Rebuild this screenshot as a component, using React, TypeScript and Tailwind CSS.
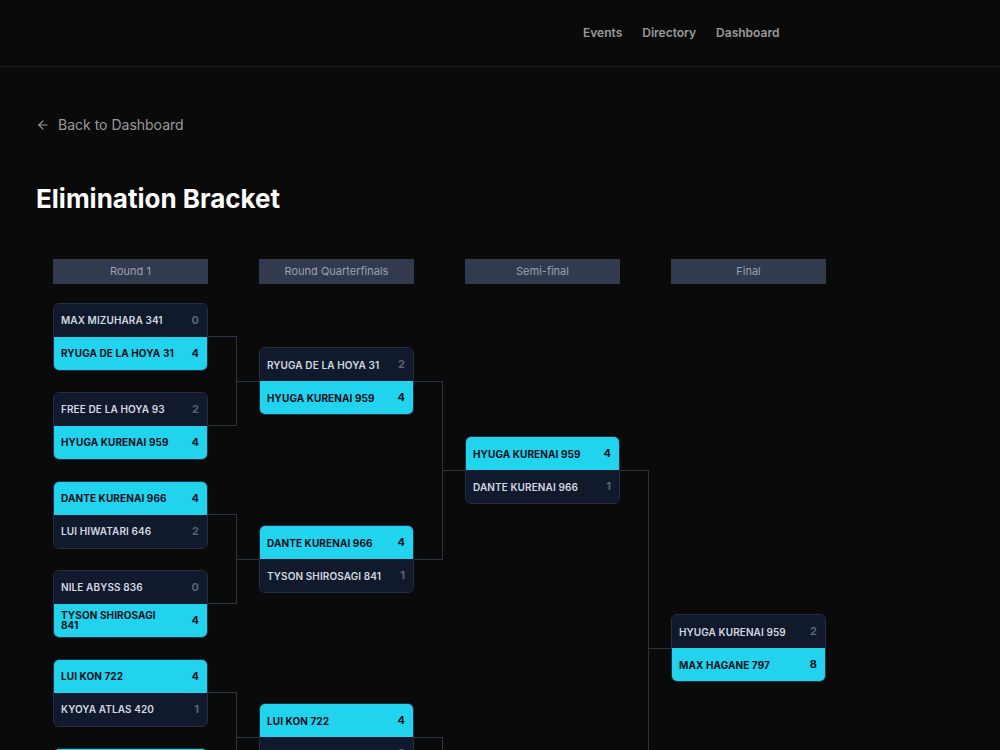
import { ArrowLeft } from "lucide-react";

type Player = { name: string; score: number };
type Match = { a: Player; b: Player };

const ROUNDS: { title: string; matches: Match[] }[] = [
  {
    title: "Round 1",
    matches: [
      { a: { name: "MAX MIZUHARA 341", score: 0 }, b: { name: "RYUGA DE LA HOYA 31", score: 4 } },
      { a: { name: "FREE DE LA HOYA 93", score: 2 }, b: { name: "HYUGA KURENAI 959", score: 4 } },
      { a: { name: "DANTE KURENAI 966", score: 4 }, b: { name: "LUI HIWATARI 646", score: 2 } },
      { a: { name: "NILE ABYSS 836", score: 0 }, b: { name: "TYSON SHIROSAGI 841", score: 4 } },
      { a: { name: "LUI KON 722", score: 4 }, b: { name: "KYOYA ATLAS 420", score: 1 } },
      { a: { name: "KAI HIWATARI 208", score: 4 }, b: { name: "ZEO ABYSS 615", score: 3 } },
      { a: { name: "MAX HAGANE 797", score: 4 }, b: { name: "KENTA TATEGAMI 118", score: 1 } },
      { a: { name: "DAIGO KUROSU 377", score: 2 }, b: { name: "SHU ABYSS 504", score: 4 } },
    ],
  },
  {
    title: "Round Quarterfinals",
    matches: [
      { a: { name: "RYUGA DE LA HOYA 31", score: 2 }, b: { name: "HYUGA KURENAI 959", score: 4 } },
      { a: { name: "DANTE KURENAI 966", score: 4 }, b: { name: "TYSON SHIROSAGI 841", score: 1 } },
      { a: { name: "LUI KON 722", score: 4 }, b: { name: "KAI HIWATARI 208", score: 2 } },
      { a: { name: "MAX HAGANE 797", score: 4 }, b: { name: "SHU ABYSS 504", score: 2 } },
    ],
  },
  {
    title: "Semi-final",
    matches: [
      { a: { name: "HYUGA KURENAI 959", score: 4 }, b: { name: "DANTE KURENAI 966", score: 1 } },
      { a: { name: "LUI KON 722", score: 1 }, b: { name: "MAX HAGANE 797", score: 4 } },
    ],
  },
  {
    title: "Final",
    matches: [{ a: { name: "HYUGA KURENAI 959", score: 2 }, b: { name: "MAX HAGANE 797", score: 8 } }],
  },
];

function Row({ p, win }: { p: Player; win: boolean }) {
  return (
    <div
      className={`flex h-[33px] items-center justify-between gap-2 pl-[7px] pr-2 ${
        win ? "bg-[#22d3ee] text-[#0b1120]" : "bg-[#111a2d] text-[#d4d8e0]"
      }`}
    >
      <span
        className={`text-[10px] uppercase leading-none tracking-[0.01em] ${
          win ? "max-w-[114px] font-bold" : "max-w-[120px] font-semibold"
        }`}
      >
        {p.name}
      </span>
      <span className={`min-w-[12px] text-right text-[11px] font-bold ${win ? "text-[#0b1120]" : "text-[#5b6478]"}`}>
        {p.score}
      </span>
    </div>
  );
}

function MatchCard({ m }: { m: Match }) {
  const aWin = m.a.score > m.b.score;
  return (
    <div className="w-[155px] overflow-hidden rounded-md border border-[#263044]">
      <Row p={m.a} win={aWin} />
      <Row p={m.b} win={!aWin} />
    </div>
  );
}

function Connector({ pairs }: { pairs: number }) {
  return (
    <div className="w-[51px] shrink-0 pt-[33px]">
      <div className="flex h-[712px] flex-col">
        {Array.from({ length: pairs }).map((_, i) => (
          <div key={i} className="flex flex-1">
            <div className="flex w-[29px] flex-col">
              <div className="flex-1" />
              <div className="flex-[2] border-y border-r border-[#2b3445]" />
              <div className="flex-1" />
            </div>
            <div className="flex flex-1 items-center">
              <div className="h-px w-full bg-[#2b3445]" />
            </div>
          </div>
        ))}
      </div>
    </div>
  );
}

export default function App() {
  return (
    <div className="min-h-screen bg-[#0a0a0a] font-['Inter',sans-serif] text-white">
      <header className="flex h-[67px] items-center border-b border-[#1f1f1f]">
        <nav className="ml-[583px] flex gap-5 text-[12px] font-semibold text-[#9a9a9a]">
          <span>Events</span>
          <span>Directory</span>
          <span>Dashboard</span>
        </nav>
      </header>

      <main className="px-9 pt-[48px]">
        <a className="flex items-center gap-2 text-sm text-[#9a9a9a]">
          <ArrowLeft className="h-3.5 w-3.5" />
          Back to Dashboard
        </a>
        <h1 className="mt-[48px] text-[26px] font-bold leading-8 text-white">Elimination Bracket</h1>

        <div className="ml-[17px] mt-[44px] flex pb-10">
          {ROUNDS.map((r, ri) => (
            <div key={r.title} className="flex">
              <div className="w-[155px] shrink-0">
                <div className="mb-2 flex h-[25px] items-center justify-center bg-[#323a4d] text-[11px] text-[#9aa3b5]">
                  {r.title}
                </div>
                <div className="flex h-[712px] flex-col">
                  {r.matches.map((m, mi) => (
                    <div key={mi} className="flex flex-1 items-center">
                      <MatchCard m={m} />
                    </div>
                  ))}
                </div>
              </div>
              {ri < ROUNDS.length - 1 && <Connector pairs={r.matches.length / 2} />}
            </div>
          ))}
        </div>
      </main>
    </div>
  );
}
